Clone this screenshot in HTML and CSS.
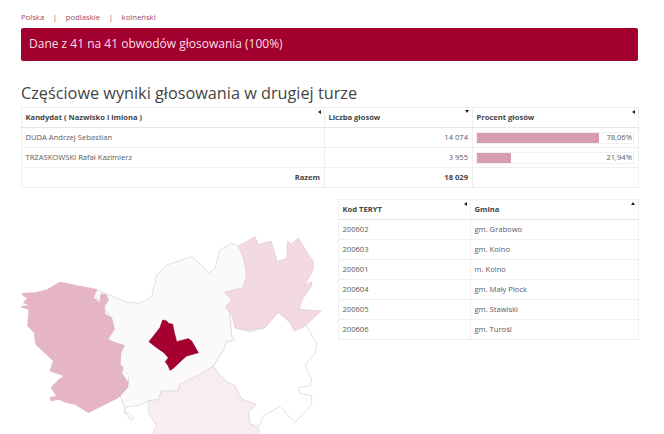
FILE: index.html
```html
<!DOCTYPE html>
<html lang="pl">
<head>
<meta charset="utf-8">
<title>Częściowe wyniki głosowania</title>
<link rel="stylesheet" href="styles.css">
</head>
<body>
<nav class="crumbs"><a>Polska</a><span class="sep">|</span><a>podlaskie</a><span class="sep">|</span><a>kolneński</a></nav>
<div class="banner">Dane z 41 na 41 obwodów głosowania (100%)</div>
<h1 class="title">Częściowe wyniki głosowania w drugiej turze</h1>
<table class="grid results">
<colgroup><col class="c1"><col class="c2"><col class="c3"></colgroup>
<thead><tr>
<th>Kandydat ( Nazwisko i imiona )<i class="sort left"></i></th>
<th>Liczba głosów<i class="sort down"></i></th>
<th>Procent głosów<i class="sort left"></i></th>
</tr></thead>
<tbody>
<tr><td>DUDA Andrzej Sebastian</td><td class="num">14 074</td><td class="barcell"><div class="bar"><div class="fill" style="width:122px"></div><span class="pct">78,06%</span></div></td></tr>
<tr><td>TRZASKOWSKI Rafał Kazimierz</td><td class="num">3 955</td><td class="barcell"><div class="bar"><div class="fill" style="width:34px"></div><span class="pct">21,94%</span></div></td></tr>
<tr class="sum"><td class="num">Razem</td><td class="num">18 029</td><td></td></tr>
</tbody>
</table>
<div class="lower">
<div class="map">
<svg width="317" height="236" viewBox="21 198 317 236" aria-hidden="true">
<g transform="translate(0 224) scale(.33333)" stroke="#dcd8da" stroke-width="2.4" stroke-linejoin="round">
<path fill="#fff" d="M915 295 950 355 945 385 915 420 935 465 930 483 895 488 900 505 935 512 935 538 885 593 840 545 790 573 778 603 750 598 745 563 768 538 725 523 705 483 685 473 655 448 640 423 670 375 680 350 705 345 695 335 690 270 695 240 708 310 750 320 790 310 835 262 870 290 882 318Z"/>
<path fill="#fafafa" d="M290 195 330 210 380 232 420 235 455 215 470 150 500 120 575 95 610 125 625 145 645 130 660 75 695 55 720 65 735 110 740 160 730 190 680 200 700 225 695 240 680 245 690 270 695 335 705 345 680 350 670 375 640 423 600 448 540 478 535 498 485 498 475 523 445 528 420 540 385 545 375 550 372 562 388 565 403 580 395 587 380 570 360 510 385 475 385 450 362 430 358 395 372 362 325 345 342 300 330 275 312 250 325 225 318 208 303 208 300 228 283 212Z"/>
<path fill="#f8edf1" stroke="#e2d8dc" d="M640 423 655 448 685 473 705 483 725 523 768 538 745 563 750 598 778 611 775 650 440 650 470 603 445 563 445 528 475 523 485 498 535 498 540 478 600 448Z"/>
</g>
<g transform="translate(15 275) scale(.33333)">
<path fill="#e5b5c5" stroke="#dfb0c0" stroke-width="2" stroke-linejoin="round" d="M22 52 60 50 95 42 135 18 190 30 245 40 235 65 255 80 258 55 272 55 280 72 268 90 270 115 290 125 298 160 278 190 300 200 328 208 318 228 315 265 325 275 320 290 340 320 338 335 310 365 270 385 220 410 180 385 155 380 130 370 108 375 105 365 125 360 108 335 130 312 148 300 105 285 115 255 62 205 58 170 38 150 42 100 15 92 45 88 25 80 38 65 25 60Z"/>
</g>
<g transform="translate(215 230) scale(.33333)">
<path fill="#f3d9e2" stroke="#e6ccd6" stroke-width="2.4" stroke-linejoin="round" d="M70 45 120 18 130 42 168 30 187 92 215 82 218 30 228 40 250 22 280 70 295 90 295 115 268 165 290 152 290 165 262 205 252 235 318 240 270 285 240 300 225 275 190 243 150 290 100 298 60 290 50 250 32 228 50 205 28 185 85 170 95 130 85 80Z"/>
</g>
<g transform="translate(140 310) scale(.33333)">
<path fill="#a50030" stroke="#8f0029" stroke-width="2" stroke-linejoin="round" d="M27 92 60 50 68 27 80 30 85 37 98 40 103 65 110 92 145 83 155 90 175 125 140 135 125 148 100 172 90 178 85 165 76 152 85 140 72 125 50 110Z"/>
</g>
</svg>
</div>
<table class="grid units">
<colgroup><col class="u1"><col class="u2"></colgroup>
<thead><tr><th>Kod TERYT<i class="sort left"></i></th><th>Gmina<i class="sort up"></i></th></tr></thead>
<tbody>
<tr><td>200602</td><td>gm. Grabowo</td></tr>
<tr><td>200603</td><td>gm. Kolno</td></tr>
<tr><td>200601</td><td>m. Kolno</td></tr>
<tr><td>200604</td><td>gm. Mały Płock</td></tr>
<tr><td>200605</td><td>gm. Stawiski</td></tr>
<tr><td>200606</td><td>gm. Turośl</td></tr>
</tbody>
</table>
</div>
</body>
</html>
```
FILE: styles.css
```css
html, body { margin: 0; height: 434px; overflow: hidden; background: #fff; }
body { padding: 0 26px 0 21px; box-sizing: border-box; font-family: "Open Sans", sans-serif; color: #5c5c5c; font-size: 7.6px; }
.crumbs { display: flex; align-items: center; height: 28px; padding-top: 5px; box-sizing: border-box; color: #a0476a; font-size: 7.7px; }
.sep { margin: 0 8.7px; }
.banner { height: 33px; line-height: 32px; padding-left: 8px; background: #a2002e; color: #fbdfe7; border-radius: 2px; font-size: 12px; box-sizing: border-box; }
.title { margin: 22px 0 3px; height: 21px; font-size: 16.25px; line-height: 21px; font-weight: 400; color: #444; }
.grid { border-collapse: collapse; table-layout: fixed; background: #fff; }
.grid th, .grid td { border: 1px solid #efefef; padding: 0 4px 2px 3.5px; height: 20px; box-sizing: border-box; text-align: left; white-space: nowrap; }
.grid th { position: relative; font-weight: 700; color: #444; border-bottom: 1px solid #e6e6e6; }
.grid td.num { text-align: right; }
.grid td.barcell { padding: 0 4px 0 3px; }
.sum td { font-weight: 700; color: #444; }
.results { width: 617px; }
.c1 { width: 303px; } .c2 { width: 148px; } .c3 { width: 166px; }
.bar { position: relative; height: 12px; border: 1px solid #f0f0f0; box-sizing: border-box; }
.fill { height: 100%; background: #d79cae; }
.pct { position: absolute; right: 1px; top: -1px; line-height: 10px; }
.lower { display: flex; align-items: flex-start; margin-top: 11px; }
.map { width: 317px; height: 236px; flex: none; }
.map svg { display: block; }
.units { width: 300px; }
.u1 { width: 132px; } .u2 { width: 168px; }
.sort { position: absolute; right: 3px; top: 2px; width: 0; height: 0; border-style: solid; border-color: transparent; }
.sort.left { border-width: 2px 3px 2px 0; border-right-color: #222; }
.sort.down { border-width: 3px 2px 0 2px; border-top-color: #222; }
.sort.up { border-width: 0 2.5px 3px 2.5px; border-bottom-color: #222; }
```
